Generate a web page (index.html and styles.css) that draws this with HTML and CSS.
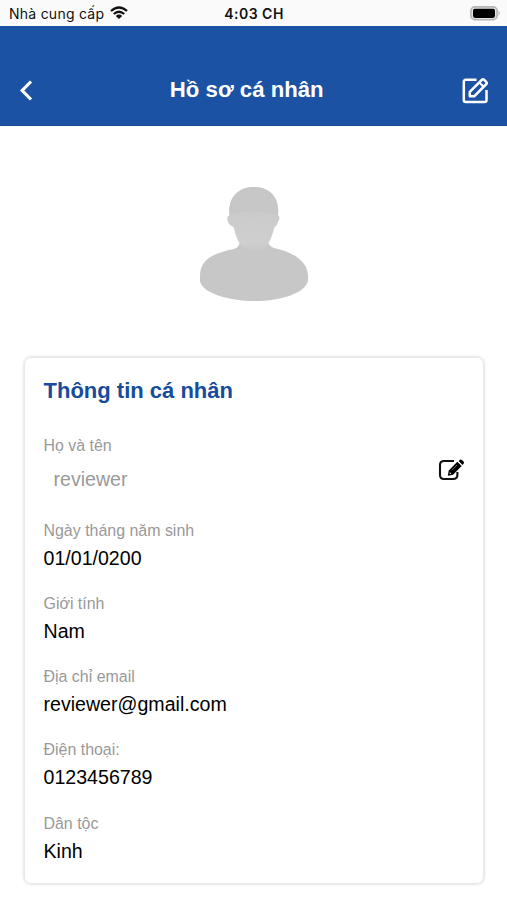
FILE: index.html
```html
<!DOCTYPE html>
<html lang="vi">
<head>
<meta charset="utf-8">
<title>Hồ sơ cá nhân</title>
<link rel="stylesheet" href="styles.css">
</head>
<body>
<div class="status">
  <div class="carrier"><span class="carrier-name">Nhà cung cấp</span>
    <svg class="wifi" width="18" height="13" viewBox="0 0 18 13" fill="none" stroke="#111" stroke-width="2.3"><path d="M1 5Q9-2 17 5"/><path d="M3.8 8Q9 3.4 14.2 8"/><path d="M9 13L5.8 10Q9 7.2 12.2 10Z" fill="#111" stroke="none"/></svg>
  </div>
  <span class="clock">4:03 CH</span>
  <svg class="battery" width="31" height="15" viewBox="0 0 31 15"><rect x=".9" y=".9" width="26.2" height="12.8" rx="4" fill="#e4e4e4" stroke="#b5b5b5" stroke-width="1.6"/><rect x="3" y="2.7" width="22" height="9.2" rx="1.8" fill="#000"/><path d="M28.5 4.6Q31 7.3 28.5 10Z" fill="#b5b5b5"/></svg>
</div>
<header class="header">
  <svg class="back" width="14" height="22" viewBox="0 0 14 22" fill="none" stroke="#fff" stroke-width="3.2"><path d="M12 2.5L3.2 11.500L12 20.500"/></svg>
  <h1 class="title">Hồ sơ cá nhân</h1>
  <svg class="edit" width="28" height="28" viewBox="0 0 28 28" fill="none" stroke="#fff" stroke-width="2.5" stroke-linejoin="round"><path d="M15.500 3.800H4.800Q2.800 3.800 2.800 5.800V24Q2.800 26 4.800 26H23.500Q25.500 26 25.500 24V14"/><path d="M8.800 20.300V15.800L21 3.700Q22 2.800 23 3.700L25.400 6.100Q26.300 7 25.400 8L13.200 20.300Z" stroke-width="2.5"/><path d="M18.300 6.500L22.600 10.800" stroke-width="2.2"/></svg>
</header>
<main>
  <div class="avatar">
    <svg width="110" height="118" viewBox="0 0 110 118">
      <defs><linearGradient id="skin" x1="0" y1="0" x2="0" y2="1"><stop offset="0" stop-color="#c7c7c7"/><stop offset=".45" stop-color="#cbcbcb"/><stop offset=".85" stop-color="#cfcfcf"/><stop offset="1" stop-color="#c7c7c7"/></linearGradient></defs>
      <path class="body" d="M41 44V55Q41 62 35 64C15 68 1 74 1 91V96C3 108 29 116 56 116S106 108 109 96V90C108 75 93 67 75 63Q69 61 69 55V44Z"/>
      <path d="M30.500 30C29 14 38 2 55 2S81 14 79 30Q82 32 79 37Q78 41 75.500 42Q72 56 68 60Q62 67 55 67T42 60Q38 56 34.500 42Q31 41 29 37Q27 31 30.500 30Z" fill="url(#skin)"/>
      <path class="hair" d="M30.500 29C29 13 39 2 55 2S80 13 79 29Q55 24 30.500 29Z"/>
    </svg>
  </div>
  <section class="card">
    <h2 class="heading">Thông tin cá nhân</h2>
    <div class="name-row">
      <div><div class="label">Họ và tên</div><div class="name">reviewer</div></div>
      <svg class="pen" width="27" height="22" viewBox="0 0 27 22"><path d="M16 2H6Q2 2 2 6V16Q2 20 6 20H15Q19.400 20 19.400 16V13" fill="none" stroke="#111" stroke-width="2.100"/><path d="M9.800 16.700L10.800 11.500L19.300 2.800L23.700 7L15 15.700Z" fill="#000"/><path d="M20.600 2L22 .7Q23 0 24 1L25.700 2.700Q26.500 3.600 25.700 4.500L24.500 5.900Z" fill="#000"/><path d="M12 13.200L13.300 14.500L12.200 15L11.400 14.200Z" fill="#fff"/><path d="M13.800 11.200L19 6" stroke="#999" stroke-width=".7"/></svg>
    </div>
    <div class="field"><div class="label">Ngày tháng năm sinh</div><div class="value">01/01/0200</div></div>
    <div class="field"><div class="label">Giới tính</div><div class="value">Nam</div></div>
    <div class="field"><div class="label">Địa chỉ email</div><div class="value">reviewer@gmail.com</div></div>
    <div class="field"><div class="label">Điện thoại:</div><div class="value">0123456789</div></div>
    <div class="field"><div class="label">Dân tộc</div><div class="value">Kinh</div></div>
  </section>
</main>
</body>
</html>
```
FILE: styles.css
```css
* { box-sizing: border-box; }
body {
  margin: 0;
  height: 900px;
  overflow: hidden;
  background: #fff;
  color: #111;
  font-family: "Liberation Sans", Arial, sans-serif;
}
h1, h2 { margin: 0; }
svg { display: block; flex: none; }
.status {
  display: grid;
  grid-template-columns: 1fr auto 1fr;
  align-items: center;
  height: 25.500px;
  padding: 0 6px 0 9px;
  background: #fafafa;
  font-family: Inter, sans-serif;
  font-size: 14px;
}
.carrier { display: flex; align-items: center; gap: 6px; }
.carrier-name { letter-spacing: .25px; white-space: nowrap; padding-top: 1px; }
.clock { font-weight: 600; padding-top: 1px; letter-spacing: .5px; margin-left: -2px; }
.battery { justify-self: end; margin-top: 1px; }
.header {
  display: grid;
  grid-template-columns: 28px 1fr 28px;
  align-items: center;
  height: 100px;
  padding: 30px 18px 0 19px;
  background: #1b52a4;
  border-bottom: 1px solid #164990;
  color: #fff;
}
.title {
  font-size: 22.200px;
  line-height: 30px;
  text-align: center;
  padding-right: 14.500px;
}
.avatar { display: flex; justify-content: center; padding-top: 59.500px; height: 231px; }
.body, .hair { fill: #c7c7c7; }
.card {
  margin: 0 23.500px 0 24px;
  height: 527.500px;
  padding: 18.500px 18px 0 18.500px;
  border: 1px solid #e8e8e8;
  border-radius: 7px;
  box-shadow: 0 0 3px rgba(0, 0, 0, .2);
}
.heading { font-size: 22px; line-height: 30px; color: #174b9b; }
.name-row { display: flex; justify-content: space-between; margin-top: 28px; height: 84.500px; }
.label { font-size: 15.950px; line-height: 24px; color: #999; }
.name { font-size: 19.600px; line-height: 32px; color: #999; margin-top: 5px; padding-left: 10px; }
.pen { margin-top: 24.500px; }
.field { height: 73.300px; }
.value { font-size: 19.600px; line-height: 32px; margin-top: -1px; color: #000; }
```
